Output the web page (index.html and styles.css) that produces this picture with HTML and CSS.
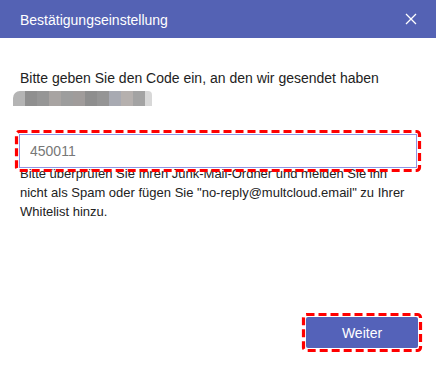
FILE: index.html
```html
<!DOCTYPE html>
<html lang="de">
<head>
    <meta charset="UTF-8">
    <meta name="viewport" content="width=device-width, initial-scale=1.0">
    <title>Bestätigungseinstellung</title>
    <link rel="stylesheet" href="styles.css">
</head>
<body>
    <div class="dialog">
        <div class="dialog-header">
            <span class="dialog-title">Bestätigungseinstellung</span>
            <button class="close-btn" type="button" aria-label="Schließen">
                <svg width="12" height="12" viewBox="0 0 12 12">
                    <path d="M1 1 L11 11 M11 1 L1 11" stroke="#ffffff" stroke-width="1.3" fill="none"/>
                </svg>
            </button>
        </div>

        <div class="dialog-body">
            <p class="intro">Bitte geben Sie den Code ein, an den wir gesendet haben</p>
            <div class="masked-email"></div>

            <div class="field highlight">
                <input class="code-input" type="text" value="450011">
                <svg class="highlight-frame"><rect rx="3" ry="3"/></svg>
            </div>
            <p class="hint">Bitte überprüfen Sie Ihren Junk-Mail-Ordner und melden Sie ihn nicht als Spam oder fügen Sie "no-reply@multcloud.email" zu Ihrer Whitelist hinzu.</p>
        </div>

        <div class="dialog-footer">
            <div class="highlight">
                <button class="btn-primary" type="button">Weiter</button>
                <svg class="highlight-frame"><rect rx="3" ry="3"/></svg>
            </div>
        </div>
    </div>
</body>
</html>
```

FILE: styles.css
```css
body {
    margin: 0;
    font-family: "Liberation Sans", Arial, sans-serif;
    background: #ffffff;
    color: #222222;
}

.dialog {
    width: 436px;
    height: 365px;
    display: flex;
    flex-direction: column;
    background: #ffffff;
}

.dialog-header {
    height: 38px;
    padding: 0 20px;
    background: #5462b4;
    display: flex;
    align-items: center;
    justify-content: space-between;
}

.dialog-title {
    color: #ffffff;
    font-size: 14px;
    padding-top: 1px;
}

.close-btn {
    background: none;
    border: none;
    padding: 0;
    margin-right: -1px;
    width: 12px;
    height: 12px;
    display: flex;
    cursor: pointer;
}

.dialog-body {
    flex: 1;
    padding: 30px 20px 0;
}

.intro {
    margin: 0;
    font-size: 14px;
    line-height: 20px;
}

.masked-email {
    width: 139px;
    height: 15px;
    margin: 3px 0 0 -7px;
    border-radius: 7px 4px 0 0;
    background: linear-gradient(90deg,
        #b4b4b4 0, #b4b4b4 12px,
        #8f8f8f 12px, #8f8f8f 24px,
        #969696 24px, #969696 36px,
        #a8a4a2 36px, #a8a4a2 48px,
        #9d9d9d 48px, #9d9d9d 60px,
        #a09c9b 60px, #a09c9b 72px,
        #8e8e8e 72px, #8e8e8e 84px,
        #959595 84px, #959595 96px,
        #a8aab2 96px, #a8aab2 108px,
        #b5b0ae 108px, #b5b0ae 120px,
        #a3a3a3 120px, #a3a3a3 132px,
        #d8d8d8 132px);
}

.field {
    width: 398px;
    margin: 28px 0 0 -1px;
}

.code-input {
    display: block;
    box-sizing: border-box;
    width: 100%;
    height: 34px;
    margin: 0;
    padding: 0 10px;
    border: 1px solid #8e95e6;
    font-family: "Liberation Sans", Arial, sans-serif;
    font-size: 14px;
    color: #777777;
    background: #ffffff;
}

.hint {
    margin: -4px 0 0;
    font-size: 13px;
    line-height: 19px;
    color: #222222;
}

/* red dashed annotation frame drawn over the element */
.highlight {
    position: relative;
    z-index: 1;
}

.highlight-frame {
    position: absolute;
    left: -4px;
    top: -4px;
    width: calc(100% + 8px);
    height: calc(100% + 8px);
    overflow: visible;
    pointer-events: none;
}

.highlight-frame rect {
    x: 1.5px;
    y: 1.5px;
    width: calc(100% - 3px);
    height: calc(100% - 3px);
    fill: none;
    stroke: #ff0000;
    stroke-width: 3.2;
    stroke-dasharray: 8 4;
}

.dialog-footer {
    display: flex;
    justify-content: flex-end;
    padding: 0 18px 17px;
}

.dialog-footer .highlight {
    display: flex;
}

.btn-primary {
    width: 112px;
    height: 31px;
    border: none;
    border-radius: 2px;
    background: #5462b9;
    color: #ffffff;
    font-family: "Liberation Sans", Arial, sans-serif;
    font-size: 14px;
    cursor: pointer;
}
```
